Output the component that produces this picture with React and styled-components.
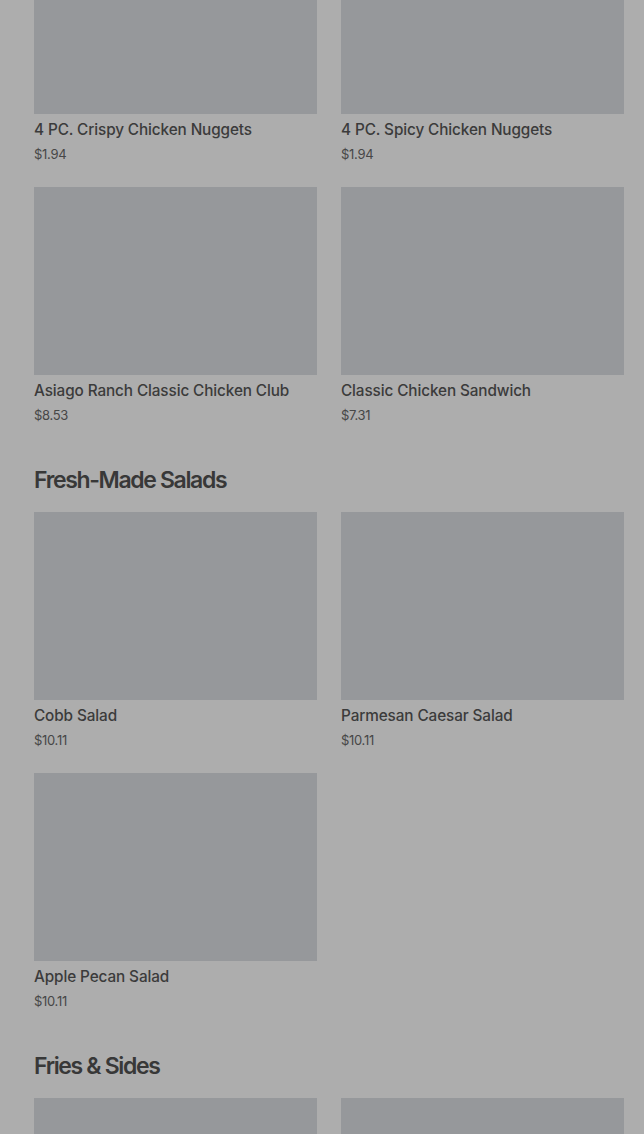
import React from "react";
import styled, { createGlobalStyle } from "styled-components";

const Global = createGlobalStyle`
  html, body { margin: 0; padding: 0; background: #adadad; }
  body { font-family: Inter, "Noto Sans", sans-serif; overflow: hidden; }
`;

const Page = styled.div`
  background: #adadad;
  height: 1134px;
  overflow: hidden;
`;

const Content = styled.div`
  margin-top: -74px;
  padding: 0 20px 0 34px;
  display: flex;
  flex-direction: column;
  gap: 39px;
`;

const Section = styled.section`
  display: flex;
  flex-direction: column;
`;

const Heading = styled.h2`
  margin: 0 0 16px;
  font-size: 23px;
  line-height: 32px;
  font-weight: 600;
  letter-spacing: -1.35px;
  color: #383838;
`;

const Grid = styled.div`
  display: grid;
  grid-template-columns: 283px 283px;
  column-gap: 24px;
  row-gap: 23px;
`;

const Card = styled.div`
  display: flex;
  flex-direction: column;
`;

const Image = styled.div`
  height: 188px;
  background: #96989b;
`;

const Title = styled.div`
  margin-top: 6px;
  font-size: 15.3px;
  line-height: 20px;
  font-weight: 500;
  color: #3b3b3b;
  letter-spacing: -0.1px;
`;

const Price = styled.div`
  margin-top: 4px;
  font-size: 13px;
  line-height: 20px;
  color: #474747;
  letter-spacing: -0.3px;
`;

const sections = [
  {
    title: null,
    items: [
      ["4 PC. Crispy Chicken Nuggets", "$1.94"],
      ["4 PC. Spicy Chicken Nuggets", "$1.94"],
      ["Asiago Ranch Classic Chicken Club", "$8.53"],
      ["Classic Chicken Sandwich", "$7.31"],
    ],
  },
  {
    title: "Fresh-Made Salads",
    items: [
      ["Cobb Salad", "$10.11"],
      ["Parmesan Caesar Salad", "$10.11"],
      ["Apple Pecan Salad", "$10.11"],
    ],
  },
  {
    title: "Fries & Sides",
    items: [
      ["", ""],
      ["", ""],
    ],
  },
];

export default function App() {
  return (
    <Page>
      <Global />
      <Content>
        {sections.map((s, i) => (
          <Section key={i}>
            {s.title && <Heading>{s.title}</Heading>}
            <Grid>
              {s.items.map(([name, price], j) => (
                <Card key={j}>
                  <Image />
                  {name && <Title>{name}</Title>}
                  {price && <Price>{price}</Price>}
                </Card>
              ))}
            </Grid>
          </Section>
        ))}
      </Content>
    </Page>
  );
}
